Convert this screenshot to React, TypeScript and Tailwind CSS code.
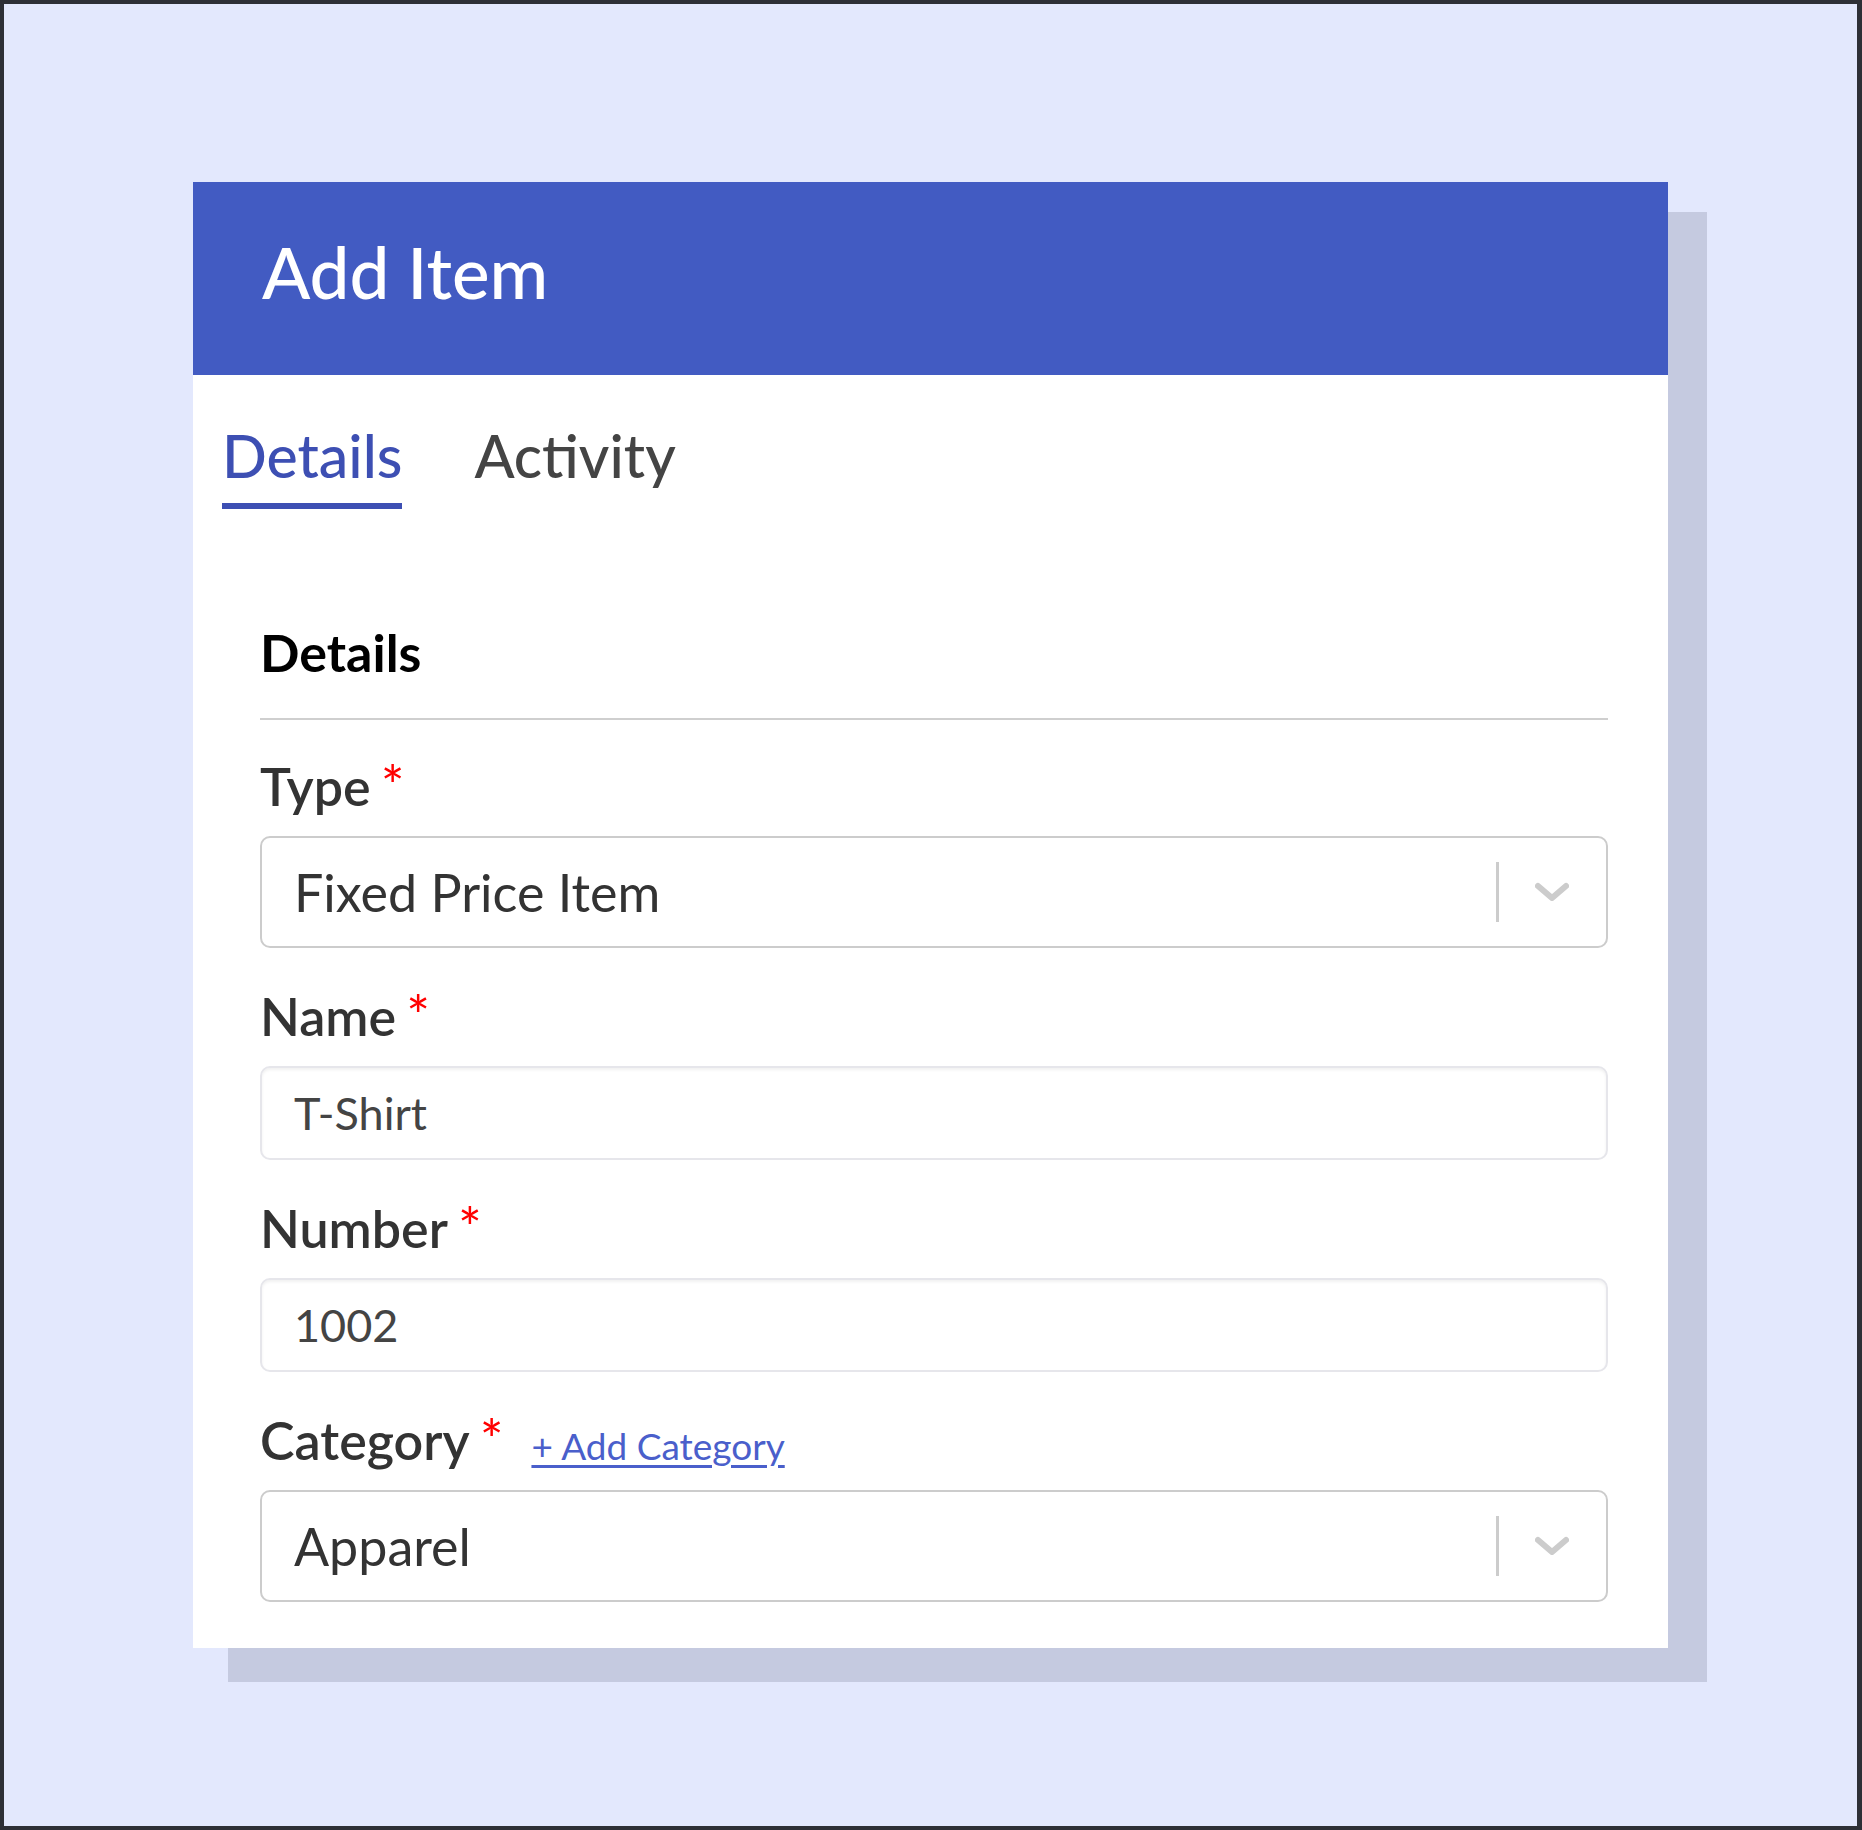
import React from 'react'

function Chevron() {
  return (
    <svg width="34" height="20" viewBox="0 0 34 20" fill="none" stroke="#cccccc" strokeWidth="6" strokeLinecap="round" strokeLinejoin="round">
      <polyline points="3,4 17,16 31,4" />
    </svg>
  )
}

function Label({ text, extra }: { text: string; extra?: React.ReactNode }) {
  return (
    <div className="text-[52px] font-semibold leading-none text-[#333333]">
      {text}
      <span className="ml-[10px] text-[56px] font-normal leading-[0] text-[#ff0000]">*</span>
      {extra}
    </div>
  )
}

function Select({ value }: { value: string }) {
  return (
    <div className="flex h-[112px] items-center rounded-[10px] border-2 border-[#cccccc] bg-white pl-[32px] pr-[37px]">
      <span className="flex-1 text-[52px] leading-none text-[#333333]">{value}</span>
      <span className="h-[60px] w-[3px] bg-[#cccccc]" />
      <span className="ml-[36px] flex">
        <Chevron />
      </span>
    </div>
  )
}

function TextField({ value }: { value: string }) {
  return (
    <div className="flex h-[94px] items-center rounded-[10px] border-2 border-[#e6e6eb] bg-white pl-[32px] shadow-[inset_0_2px_3px_rgba(0,0,0,0.06)]">
      <span className="text-[45px] leading-none text-[#444444]">{value}</span>
    </div>
  )
}

export default function App() {
  return (
    <div className="h-[1830px] w-full border-4 border-r-[5px] border-[#2d2f36] bg-[#e3e8fd] pl-[189px] pt-[178px] font-['Lato',sans-serif]">
      <div className="w-[1475px] bg-white shadow-[37px_32px_0_2px_#c5cae0]">
        {/* Header */}
        <div className="flex h-[193px] items-center bg-[#425bc2] pb-[14px] pl-[69px]">
          <h1 className="text-[71px] font-medium leading-none text-white">Add Item</h1>
        </div>

        {/* Tabs */}
        <div className="flex gap-[72px] pl-[29px] pt-[51px]">
          <button className="border-b-[6px] border-[#3d4fb3] pb-[18px] text-[59px] font-medium leading-none text-[#3d4fb3]">
            Details
          </button>
          <button className="border-b-[6px] border-transparent pb-[18px] text-[59px] font-medium leading-none text-[#444444]">
            Activity
          </button>
        </div>

        {/* Body */}
        <div className="pb-[46px] pl-[67px] pr-[60px] pt-[117px]">
          <h2 className="text-[52px] font-bold leading-none text-black">Details</h2>
          <div className="mt-[40px] h-[2px] bg-[#cfcfcf]" />

          <div className="mt-[40px] flex flex-col gap-[42px]">
            <div className="flex flex-col gap-[24px]">
              <Label text="Type" />
              <Select value="Fixed Price Item" />
            </div>
            <div className="flex flex-col gap-[24px]">
              <Label text="Name" />
              <TextField value="T-Shirt" />
            </div>
            <div className="flex flex-col gap-[24px]">
              <Label text="Number" />
              <TextField value="1002" />
            </div>
            <div className="flex flex-col gap-[24px]">
              <Label
                text="Category"
                extra={
                  <a href="#" className="ml-[28px] text-[37px] font-normal text-[#4a5fcb] underline underline-offset-[5px]">
                    + Add Category
                  </a>
                }
              />
              <Select value="Apparel" />
            </div>
          </div>
        </div>
      </div>
    </div>
  )
}
